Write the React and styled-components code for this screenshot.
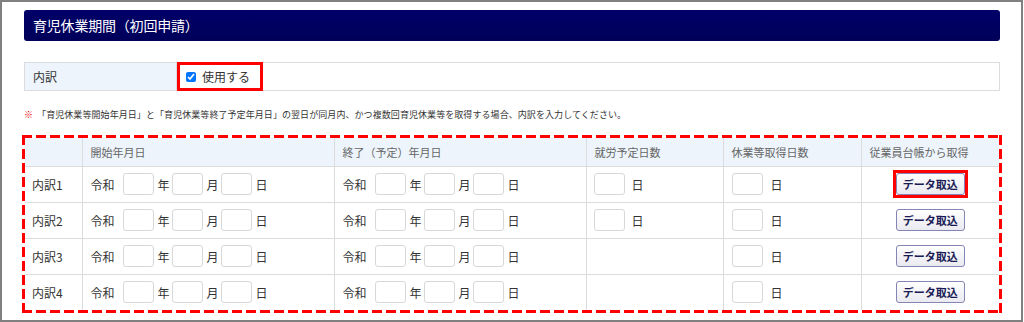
import React from "react";
import styled, { createGlobalStyle } from "styled-components";

const Global = createGlobalStyle`
  html, body { margin: 0; padding: 0; background: #fff; }
  body { font-family: "Noto Sans CJK JP", "Noto Sans", sans-serif; color: #333; }
  * { box-sizing: border-box; }
`;

const Frame = styled.div`
  width: 1023px;
  height: 322px;
  border: 2px solid #808080;
  padding: 8px 21px 0 22px;
  overflow: hidden;
`;

const TitleBar = styled.div`
  height: 31px;
  border-radius: 3px;
  background: linear-gradient(#000068, #00005a);
  color: #fff;
  font-size: 14px;
  line-height: 31px;
  padding-left: 9px;
  letter-spacing: -0.2px;
`;

const InfoRow = styled.div`
  margin-top: 21px;
  display: flex;
  height: 29px;
  border: 1px solid #dcdcdc;
`;

const InfoLabel = styled.div`
  width: 152px;
  background: #edf4fb;
  border-right: 1px solid #dcdcdc;
  display: flex;
  align-items: center;
  padding-left: 8px;
  font-size: 12px;
`;

const InfoValue = styled.div`
  flex: 1;
  display: flex;
  align-items: center;
  padding-left: 3px;
`;

const Highlight = styled.label`
  display: inline-flex;
  align-items: center;
  height: 23px;
  padding: 0 10px 0 6px;
  outline: 3px solid #ff0000;
  font-size: 12px;
`;

const Check = styled.input`
  width: 10px;
  height: 10px;
  margin: 0 6px 0 0;
  accent-color: #0075ff;
`;

const Note = styled.p`
  margin: 17px 0 0 0;
  font-size: 9px;
  line-height: 14px;
  color: #333;
  letter-spacing: 0.07px;
`;

const Mark = styled.span`
  color: #e60000;
  margin-right: 4px;
`;

const DashedFrame = styled.div`
  margin: 13px -2px 0 -2px;
  padding: 3px;
  --dash: #ff0000;
  background:
    repeating-linear-gradient(90deg, var(--dash) 0 10px, transparent 10px 14px) top left / 100% 3px no-repeat,
    repeating-linear-gradient(90deg, var(--dash) 0 10px, transparent 10px 14px) bottom left / 100% 3px no-repeat,
    repeating-linear-gradient(180deg, var(--dash) 0 10px, transparent 10px 14px) top left / 3px 100% no-repeat,
    repeating-linear-gradient(180deg, var(--dash) 0 10px, transparent 10px 14px) top right / 3px 100% no-repeat;
`;

const Table = styled.table`
  width: 974px;
  table-layout: fixed;
  border-collapse: collapse;
  font-size: 12px;
`;

const Th = styled.th`
  height: 28px;
  background: #edf4fb;
  border: 1px solid #dcdcdc;
  border-top: none;
  color: #666;
  font-weight: normal;
  font-size: 11px;
  text-align: left;
  padding: 0 0 0 8px;
  &:first-child { border-left: none; }
  &:last-child { border-right: none; }
`;

const Td = styled.td`
  height: 36px;
  border: 1px solid #dcdcdc;
  padding: 0 0 0 ${(p) => (p.$pad ?? 8)}px;
  text-align: ${(p) => (p.$center ? "center" : "left")};
  vertical-align: middle;
  &:first-child { border-left: none; }
  &:last-child { border-right: none; }
  tr:last-child > & { border-bottom: none; }
`;

const Fields = styled.div`
  display: flex;
  align-items: center;
`;

const Era = styled.span`
  width: 32px;
`;

const Box = styled.input`
  width: 31px;
  height: 22px;
  border: 1px solid #d8d8d8;
  border-radius: 3px;
  background: #fff;
  padding: 0;
  margin: 0;
  font-size: 12px;
`;

const Unit = styled.span`
  margin: 0 ${(p) => p.$after ?? 2}px 0 ${(p) => p.$before ?? 4}px;
`;

const ButtonMark = styled.span`
  display: inline-flex;
  outline: ${(p) => (p.$marked ? "3px solid #ff0000" : "none")};
`;

const FetchButton = styled.button`
  width: 69px;
  height: 22px;
  border: 1px solid #8585b5;
  border-radius: 3px;
  background: linear-gradient(#ffffff, #e9e9f0);
  color: #1a1a55;
  font-family: "Noto Sans CJK JP", sans-serif;
  font-weight: bold;
  font-size: 11px;
  padding: 0;
  line-height: 20px;
`;

function DateFields() {
  return (
    <Fields>
      <Era>令和</Era>
      <Box />
      <Unit>年</Unit>
      <Box />
      <Unit>月</Unit>
      <Box />
      <Unit>日</Unit>
    </Fields>
  );
}

function DayField({ gap }) {
  return (
    <Fields>
      <Box />
      <Unit $before={gap}>日</Unit>
    </Fields>
  );
}

const rows = [
  { label: "内訳1", work: true, marked: true },
  { label: "内訳2", work: true },
  { label: "内訳3", work: false },
  { label: "内訳4", work: false },
];

export default function App() {
  return (
    <>
      <Global />
      <Frame>
        <TitleBar>育児休業期間（初回申請）</TitleBar>
        <InfoRow>
          <InfoLabel>内訳</InfoLabel>
          <InfoValue>
            <Highlight>
              <Check type="checkbox" defaultChecked />
              使用する
            </Highlight>
          </InfoValue>
        </InfoRow>
        <Note>
          <Mark>※</Mark>
          「育児休業等開始年月日」と「育児休業等終了予定年月日」の翌日が同月内、かつ複数回育児休業等を取得する場合、内訳を入力してください。
        </Note>
        <DashedFrame>
          <Table>
            <colgroup>
              <col style={{ width: 57 }} />
              <col style={{ width: 252 }} />
              <col style={{ width: 252 }} />
              <col style={{ width: 137 }} />
              <col style={{ width: 138 }} />
              <col style={{ width: 138 }} />
            </colgroup>
            <thead>
              <tr>
                <Th></Th>
                <Th>開始年月日</Th>
                <Th>終了（予定）年月日</Th>
                <Th>就労予定日数</Th>
                <Th>休業等取得日数</Th>
                <Th>従業員台帳から取得</Th>
              </tr>
            </thead>
            <tbody>
              {rows.map((r) => (
                <tr key={r.label}>
                  <Td $pad={7}>{r.label}</Td>
                  <Td>
                    <DateFields />
                  </Td>
                  <Td>
                    <DateFields />
                  </Td>
                  <Td $pad={7}>{r.work ? <DayField gap={7} /> : null}</Td>
                  <Td>
                    <DayField gap={8} />
                  </Td>
                  <Td $pad={0} $center>
                    <ButtonMark $marked={r.marked}>
                      <FetchButton>データ取込</FetchButton>
                    </ButtonMark>
                  </Td>
                </tr>
              ))}
            </tbody>
          </Table>
        </DashedFrame>
      </Frame>
    </>
  );
}
